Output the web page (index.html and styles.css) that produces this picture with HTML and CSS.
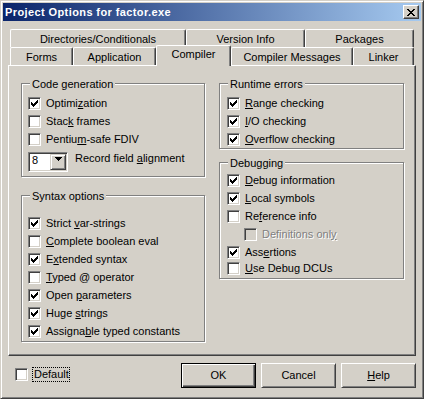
FILE: index.html
```html
<!DOCTYPE html>
<html>
<head>
<meta charset="utf-8">
<title>Project Options for factor.exe</title>
<link rel="stylesheet" href="styles.css">
</head>
<body>
<div class="window">
  <div class="caption">
    <span class="caption-text">Project Options for factor.exe</span>
    <span class="cap-btn"><svg width="8" height="7" viewBox="0 0 8 7" shape-rendering="crispEdges"><path fill="#000" d="M0 0h2v1H0zM6 0h2v1H6zM1 1h2v1H1zM5 1h2v1H5zM2 2h4v1H2zM3 3h2v1H3zM2 4h4v1H2zM1 5h2v1H1zM5 5h2v1H5zM0 6h2v1H0zM6 6h2v1H6z"/></svg></span>
  </div>
  <div class="client">
    <div class="tabs">
      <div class="tab-row">
        <div class="tab w-dir">Directories/Conditionals</div>
        <div class="tab w-ver">Version Info</div>
        <div class="tab w-pkg">Packages</div>
      </div>
      <div class="tab-row">
        <div class="tab w-forms">Forms</div>
        <div class="tab w-app">Application</div>
        <div class="tab sel w-comp">Compiler</div>
        <div class="tab w-msg">Compiler Messages</div>
        <div class="tab w-link">Linker</div>
      </div>
    </div>
    <div class="panel">
      <div class="col">
        <div class="group g-code">
          <div class="g-title">Code generation</div>
          <div class="rows r-code">
            <div class="row"><span class="cb"><svg width="7" height="7" viewBox="0 0 7 7" shape-rendering="crispEdges"><path fill="#000" d="M6 0h1v1H6zM5 1h2v1H5zM0 2h1v1H0zM4 2h3v1H4zM0 3h2v1H0zM3 3h3v1H3zM0 4h5v1H0zM1 5h3v1H1zM2 6h1v1H2z"/></svg></span><span class="lbl">Optimi<u>z</u>ation</span></div>
            <div class="row"><span class="cb"></span><span class="lbl">Stac<u>k</u> frames</span></div>
            <div class="row"><span class="cb"></span><span class="lbl">Pentiu<u>m</u>-safe FDIV</span></div>
            <div class="combo-row">
              <div class="combo">
                <span class="combo-val">8</span>
                <span class="combo-btn"><svg width="7" height="4" viewBox="0 0 7 4" shape-rendering="crispEdges"><path fill="#000" d="M0 0h7v1H0zM1 1h5v1H1zM2 2h3v1H2zM3 3h1v1H3z"/></svg></span>
              </div>
              <span class="lbl">Record field <u>a</u>lignment</span>
            </div>
          </div>
        </div>
        <div class="group g-syntax">
          <div class="g-title">Syntax options</div>
          <div class="rows r-syntax">
            <div class="row"><span class="cb"><svg width="7" height="7" viewBox="0 0 7 7" shape-rendering="crispEdges"><path fill="#000" d="M6 0h1v1H6zM5 1h2v1H5zM0 2h1v1H0zM4 2h3v1H4zM0 3h2v1H0zM3 3h3v1H3zM0 4h5v1H0zM1 5h3v1H1zM2 6h1v1H2z"/></svg></span><span class="lbl">Strict <u>v</u>ar-strings</span></div>
            <div class="row"><span class="cb"></span><span class="lbl"><u>C</u>omplete boolean eval</span></div>
            <div class="row"><span class="cb"><svg width="7" height="7" viewBox="0 0 7 7" shape-rendering="crispEdges"><path fill="#000" d="M6 0h1v1H6zM5 1h2v1H5zM0 2h1v1H0zM4 2h3v1H4zM0 3h2v1H0zM3 3h3v1H3zM0 4h5v1H0zM1 5h3v1H1zM2 6h1v1H2z"/></svg></span><span class="lbl">E<u>x</u>tended syntax</span></div>
            <div class="row"><span class="cb"></span><span class="lbl"><u>T</u>yped @ operator</span></div>
            <div class="row"><span class="cb"><svg width="7" height="7" viewBox="0 0 7 7" shape-rendering="crispEdges"><path fill="#000" d="M6 0h1v1H6zM5 1h2v1H5zM0 2h1v1H0zM4 2h3v1H4zM0 3h2v1H0zM3 3h3v1H3zM0 4h5v1H0zM1 5h3v1H1zM2 6h1v1H2z"/></svg></span><span class="lbl">Open <u>p</u>arameters</span></div>
            <div class="row"><span class="cb"><svg width="7" height="7" viewBox="0 0 7 7" shape-rendering="crispEdges"><path fill="#000" d="M6 0h1v1H6zM5 1h2v1H5zM0 2h1v1H0zM4 2h3v1H4zM0 3h2v1H0zM3 3h3v1H3zM0 4h5v1H0zM1 5h3v1H1zM2 6h1v1H2z"/></svg></span><span class="lbl">Huge <u>s</u>trings</span></div>
            <div class="row"><span class="cb"><svg width="7" height="7" viewBox="0 0 7 7" shape-rendering="crispEdges"><path fill="#000" d="M6 0h1v1H6zM5 1h2v1H5zM0 2h1v1H0zM4 2h3v1H4zM0 3h2v1H0zM3 3h3v1H3zM0 4h5v1H0zM1 5h3v1H1zM2 6h1v1H2z"/></svg></span><span class="lbl">Assigna<u>b</u>le typed constants</span></div>
          </div>
        </div>
      </div>
      <div class="col">
        <div class="group g-runtime">
          <div class="g-title">Runtime errors</div>
          <div class="rows r-runtime">
            <div class="row"><span class="cb"><svg width="7" height="7" viewBox="0 0 7 7" shape-rendering="crispEdges"><path fill="#000" d="M6 0h1v1H6zM5 1h2v1H5zM0 2h1v1H0zM4 2h3v1H4zM0 3h2v1H0zM3 3h3v1H3zM0 4h5v1H0zM1 5h3v1H1zM2 6h1v1H2z"/></svg></span><span class="lbl"><u>R</u>ange checking</span></div>
            <div class="row"><span class="cb"><svg width="7" height="7" viewBox="0 0 7 7" shape-rendering="crispEdges"><path fill="#000" d="M6 0h1v1H6zM5 1h2v1H5zM0 2h1v1H0zM4 2h3v1H4zM0 3h2v1H0zM3 3h3v1H3zM0 4h5v1H0zM1 5h3v1H1zM2 6h1v1H2z"/></svg></span><span class="lbl"><u>I</u>/O checking</span></div>
            <div class="row"><span class="cb"><svg width="7" height="7" viewBox="0 0 7 7" shape-rendering="crispEdges"><path fill="#000" d="M6 0h1v1H6zM5 1h2v1H5zM0 2h1v1H0zM4 2h3v1H4zM0 3h2v1H0zM3 3h3v1H3zM0 4h5v1H0zM1 5h3v1H1zM2 6h1v1H2z"/></svg></span><span class="lbl"><u>O</u>verflow checking</span></div>
          </div>
        </div>
        <div class="group g-debug">
          <div class="g-title">Debugging</div>
          <div class="rows r-debug">
            <div class="row"><span class="cb"><svg width="7" height="7" viewBox="0 0 7 7" shape-rendering="crispEdges"><path fill="#000" d="M6 0h1v1H6zM5 1h2v1H5zM0 2h1v1H0zM4 2h3v1H4zM0 3h2v1H0zM3 3h3v1H3zM0 4h5v1H0zM1 5h3v1H1zM2 6h1v1H2z"/></svg></span><span class="lbl"><u>D</u>ebug information</span></div>
            <div class="row"><span class="cb"><svg width="7" height="7" viewBox="0 0 7 7" shape-rendering="crispEdges"><path fill="#000" d="M6 0h1v1H6zM5 1h2v1H5zM0 2h1v1H0zM4 2h3v1H4zM0 3h2v1H0zM3 3h3v1H3zM0 4h5v1H0zM1 5h3v1H1zM2 6h1v1H2z"/></svg></span><span class="lbl"><u>L</u>ocal symbols</span></div>
            <div class="row"><span class="cb"></span><span class="lbl">Re<u>f</u>erence info</span></div>
            <div class="row indent"><span class="cb dis"></span><span class="lbl dim">Definitions onl<u>y</u></span></div>
            <div class="row"><span class="cb"><svg width="7" height="7" viewBox="0 0 7 7" shape-rendering="crispEdges"><path fill="#000" d="M6 0h1v1H6zM5 1h2v1H5zM0 2h1v1H0zM4 2h3v1H4zM0 3h2v1H0zM3 3h3v1H3zM0 4h5v1H0zM1 5h3v1H1zM2 6h1v1H2z"/></svg></span><span class="lbl">Ass<u>e</u>rtions</span></div>
            <div class="row tight"><span class="cb"></span><span class="lbl"><u>U</u>se Debug DCUs</span></div>
          </div>
        </div>
      </div>
    </div>
    <div class="footer">
      <span class="cb default-cb"></span>
      <span class="focus">Default</span>
      <div class="buttons">
        <div class="btn def">OK</div>
        <div class="btn">Cancel</div>
        <div class="btn"><u>H</u>elp</div>
      </div>
    </div>
  </div>
</div>
</body>
</html>
```
FILE: styles.css
```css
* { box-sizing: border-box; }
html, body { margin: 0; padding: 0; }
body {
  width: 424px;
  height: 399px;
  overflow: hidden;
  background: #D4D0C8;
  font-family: "Liberation Sans", Arial, sans-serif;
  font-size: 11px;
  color: #000;
}
u { text-decoration: underline; text-underline-offset: 1px; }

.window {
  width: 424px;
  height: 399px;
  background: #D4D0C8;
  border: 1px solid;
  border-color: #D4D0C8 #404040 #404040 #D4D0C8;
  box-shadow: inset 1px 1px 0 #fff, inset -1px -1px 0 #808080;
  padding: 2px;
  display: flex;
  flex-direction: column;
}

.caption {
  height: 18px;
  flex: none;
  display: flex;
  align-items: center;
  background: linear-gradient(to right, #0A246A, #A6CAF0);
  color: #fff;
  font-weight: bold;
  padding-left: 2px;
}
.caption-text {
  flex: 1;
  line-height: 18px;
  letter-spacing: 0.4px;
  white-space: nowrap;
}
.cap-btn {
  width: 16px;
  height: 14px;
  margin-right: 2px;
  background: #D4D0C8;
  border: 1px solid;
  border-color: #fff #404040 #404040 #fff;
  box-shadow: inset -1px -1px 0 #808080;
}
.cap-btn svg { display: block; margin: 3px 0 0 3px; }

.client {
  flex: 1;
  padding: 8px 5px 0 5px;
}

.tab-row {
  display: flex;
  align-items: flex-start;
  height: 18px;
  margin: 0 2px;
}
.tab {
  height: 18px;
  flex: none;
  background: #D4D0C8;
  border-top: 1px solid #fff;
  border-left: 1px solid #fff;
  border-right: 1px solid #404040;
  border-radius: 2px 2px 0 0;
  box-shadow: inset -1px 0 0 #808080;
  text-align: center;
  padding-top: 2px;
  line-height: 14px;
  white-space: nowrap;
}
.tab.sel {
  height: 21px;
  margin-top: -2px;
  padding-top: 1px;
  position: relative;
  z-index: 1;
}
.w-dir { width: 176px; }
.w-ver { width: 119px; }
.w-pkg { width: 109px; }
.w-forms { width: 63px; }
.w-app { width: 83px; }
.w-comp { width: 75px; }
.w-msg { width: 122px; }
.w-link { width: 61px; }

.panel {
  height: 291px;
  border: 1px solid;
  border-color: #fff #404040 #404040 #fff;
  box-shadow: inset -1px -1px 0 #808080;
  display: grid;
  grid-template-columns: 184px 185px;
  column-gap: 14px;
  align-items: start;
  padding: 17px 0 0 12px;
}
.col { display: flex; flex-direction: column; }

.group {
  border: 1px solid #808080;
  box-shadow: 1px 1px 0 #fff, inset 1px 1px 0 #fff;
  display: flex;
  flex-direction: column;
  align-items: flex-start;
}
.g-code { height: 94px; }
.g-syntax { height: 147px; margin-top: 18px; }
.g-runtime { height: 66px; }
.g-debug { height: 117px; margin-top: 13px; }

.g-title {
  margin: -6px 0 0 8px;
  padding: 0 2px;
  background: #D4D0C8;
  height: 13px;
  line-height: 13px;
  white-space: nowrap;
}

.rows {
  align-self: stretch;
  display: flex;
  flex-direction: column;
  padding-left: 6px;
}
.r-code { margin-top: 3px; }
.r-syntax { margin-top: 11px; }
.r-runtime { margin-top: 3px; padding-left: 7px; }
.r-debug { margin-top: 1px; padding-left: 7px; }

.row {
  height: 18px;
  display: flex;
  align-items: center;
  gap: 5px;
  white-space: nowrap;
}
.row.indent { padding-left: 17px; }
.row.tight { margin-top: -2px; }
.lbl { line-height: 13px; }
.lbl.dim { color: #808080; text-shadow: 1px 1px 0 #fff; }

.cb {
  width: 13px;
  height: 13px;
  flex: none;
  display: block;
  background: #fff;
  border: 1px solid;
  border-color: #808080 #fff #fff #808080;
  box-shadow: inset 1px 1px 0 #404040, inset -1px -1px 0 #D4D0C8;
  padding: 2px;
}
.cb svg { display: block; }
.cb.dis { background: #D4D0C8; }

.combo-row {
  display: flex;
  align-items: flex-start;
  gap: 7px;
  margin-top: 4px;
  white-space: nowrap;
}
.combo {
  width: 40px;
  height: 20px;
  display: flex;
  background: #fff;
  border: 1px solid;
  border-color: #808080 #fff #fff #808080;
  box-shadow: inset 1px 1px 0 #404040, inset -1px -1px 0 #D4D0C8;
  padding: 1px;
}
.combo-val {
  flex: 1;
  padding-left: 2px;
  line-height: 13px;
}
.combo-btn {
  width: 16px;
  height: 16px;
  flex: none;
  background: #D4D0C8;
  border: 1px solid;
  border-color: #D4D0C8 #404040 #404040 #D4D0C8;
  box-shadow: inset 1px 1px 0 #fff, inset -1px -1px 0 #808080;
  padding: 2px 0 0 4px;
}
.combo-btn svg { display: block; }

.footer {
  display: flex;
  align-items: flex-start;
  height: 25px;
  margin-top: 7px;
  padding-left: 7px;
}
.default-cb { margin-top: 5px; }
.focus {
  margin: 4px 0 0 4px;
  height: 15px;
  border: 1px dotted #000;
  padding: 0 0 0 1px;
  line-height: 13px;
  white-space: nowrap;
}
.buttons {
  margin-left: auto;
  display: flex;
  gap: 5px;
}
.btn {
  width: 75px;
  height: 25px;
  background: #D4D0C8;
  border: 1px solid;
  border-color: #fff #404040 #404040 #fff;
  box-shadow: inset 1px 1px 0 #D4D0C8, inset -1px -1px 0 #808080;
  text-align: center;
  line-height: 23px;
}
.btn.def {
  border: 1px solid #000;
  box-shadow: inset 1px 1px 0 #fff, inset -1px -1px 0 #404040, inset -2px -2px 0 #808080;
}
```
